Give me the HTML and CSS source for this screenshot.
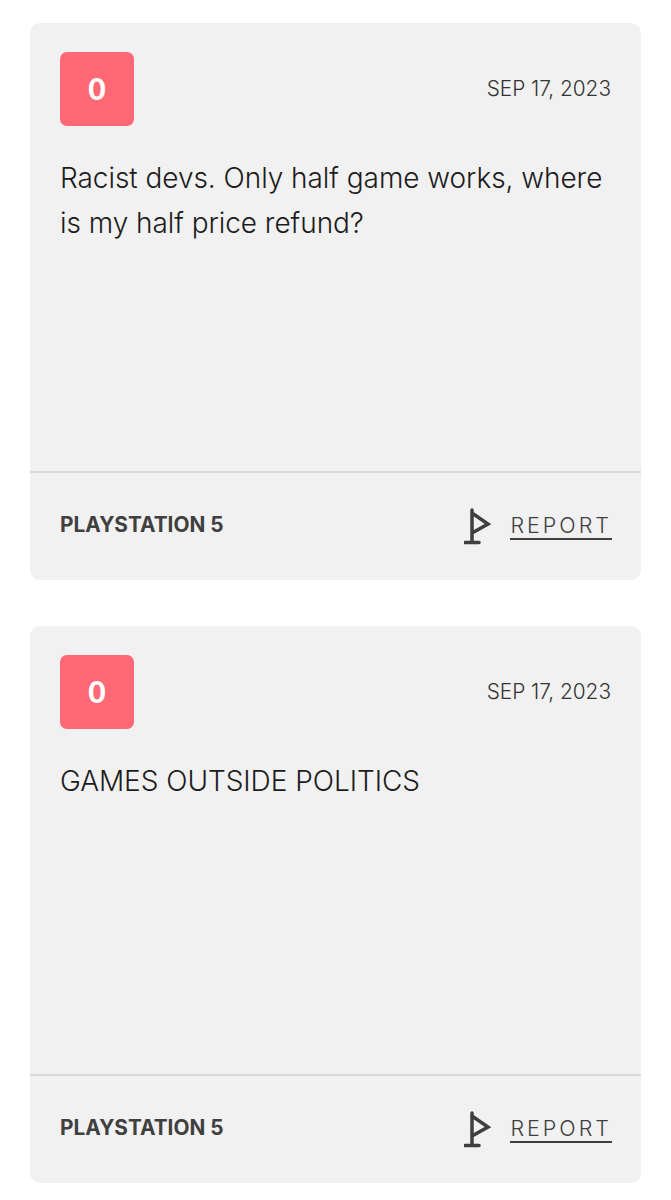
FILE: index.html
```html
<!DOCTYPE html>
<html lang="en">
<head>
  <meta charset="UTF-8">
  <meta name="viewport" content="width=device-width, initial-scale=1.0">
  <title>User Reviews</title>
  <link rel="stylesheet" href="styles.css">
</head>
<body>

  <div class="review">
    <div class="review-body">
      <div class="review-head">
        <div class="score">0</div>
        <div class="date">SEP 17, 2023</div>
      </div>
      <p class="text">Racist devs. Only half game works, where is my half price refund?</p>
    </div>
    <div class="review-foot">
      <div class="platform">PLAYSTATION 5</div>
      <a class="report" href="#">
        <svg class="flag" width="28" height="40" viewBox="0 0 28 40"><path d="M8 3V35M1 35.500H15M8 6L24 17L8 26" fill="none" stroke="#3f3f3f" stroke-width="3.500" stroke-linecap="round" stroke-linejoin="miter"/></svg>
        <span class="report-label">REPORT</span>
      </a>
    </div>
  </div>

  <div class="review">
    <div class="review-body">
      <div class="review-head">
        <div class="score">0</div>
        <div class="date">SEP 17, 2023</div>
      </div>
      <p class="text">GAMES OUTSIDE POLITICS</p>
    </div>
    <div class="review-foot">
      <div class="platform">PLAYSTATION 5</div>
      <a class="report" href="#">
        <svg class="flag" width="28" height="40" viewBox="0 0 28 40"><path d="M8 3V35M1 35.500H15M8 6L24 17L8 26" fill="none" stroke="#3f3f3f" stroke-width="3.500" stroke-linecap="round" stroke-linejoin="miter"/></svg>
        <span class="report-label">REPORT</span>
      </a>
    </div>
  </div>

</body>
</html>
```

FILE: styles.css
```css
body {
  font-family: Inter, Lato, sans-serif;
  margin: 0;
  padding: 23px 30px 0;
  background-color: #fff;
}
.review {
  background-color: #f1f1f1;
  border-radius: 10px;
  margin-bottom: 46px;
}
.review-body {
  height: 450px;
  padding: 29px 30px 0;
  box-sizing: border-box;
  border-bottom: 2px solid #d9d9d9;
}
.review-head {
  display: flex;
  justify-content: space-between;
}
.score {
  width: 74px;
  height: 74px;
  border-radius: 7px;
  background-color: #ff6874;
  color: #fff;
  font-family: Lato, sans-serif;
  font-size: 30px;
  font-weight: 900;
  line-height: 73px;
  text-align: center;
}
.date {
  font-size: 20.800px;
  font-weight: 300;
  line-height: 73px;
  color: #333;
}
.text {
  margin: 30px 0 0;
  font-size: 28px;
  font-weight: 300;
  letter-spacing: -0.05px;
  line-height: 45px;
  color: #1c1c1c;
}
.review-foot {
  height: 107px;
  padding: 0 30px;
  box-sizing: border-box;
  display: flex;
  justify-content: space-between;
  align-items: center;
}
.platform {
  font-size: 20.800px;
  font-weight: 700;
  margin-bottom: 5px;
  color: #404040;
}
.report {
  display: flex;
  align-items: center;
  gap: 18px;
  color: #404040;
  text-decoration: none;
}
.report-label {
  font-size: 21.500px;
  font-weight: 300;
  letter-spacing: 3px;
  margin-right: -1px;
  border-bottom: 2px solid #404040;
  line-height: 25px;
}
```
